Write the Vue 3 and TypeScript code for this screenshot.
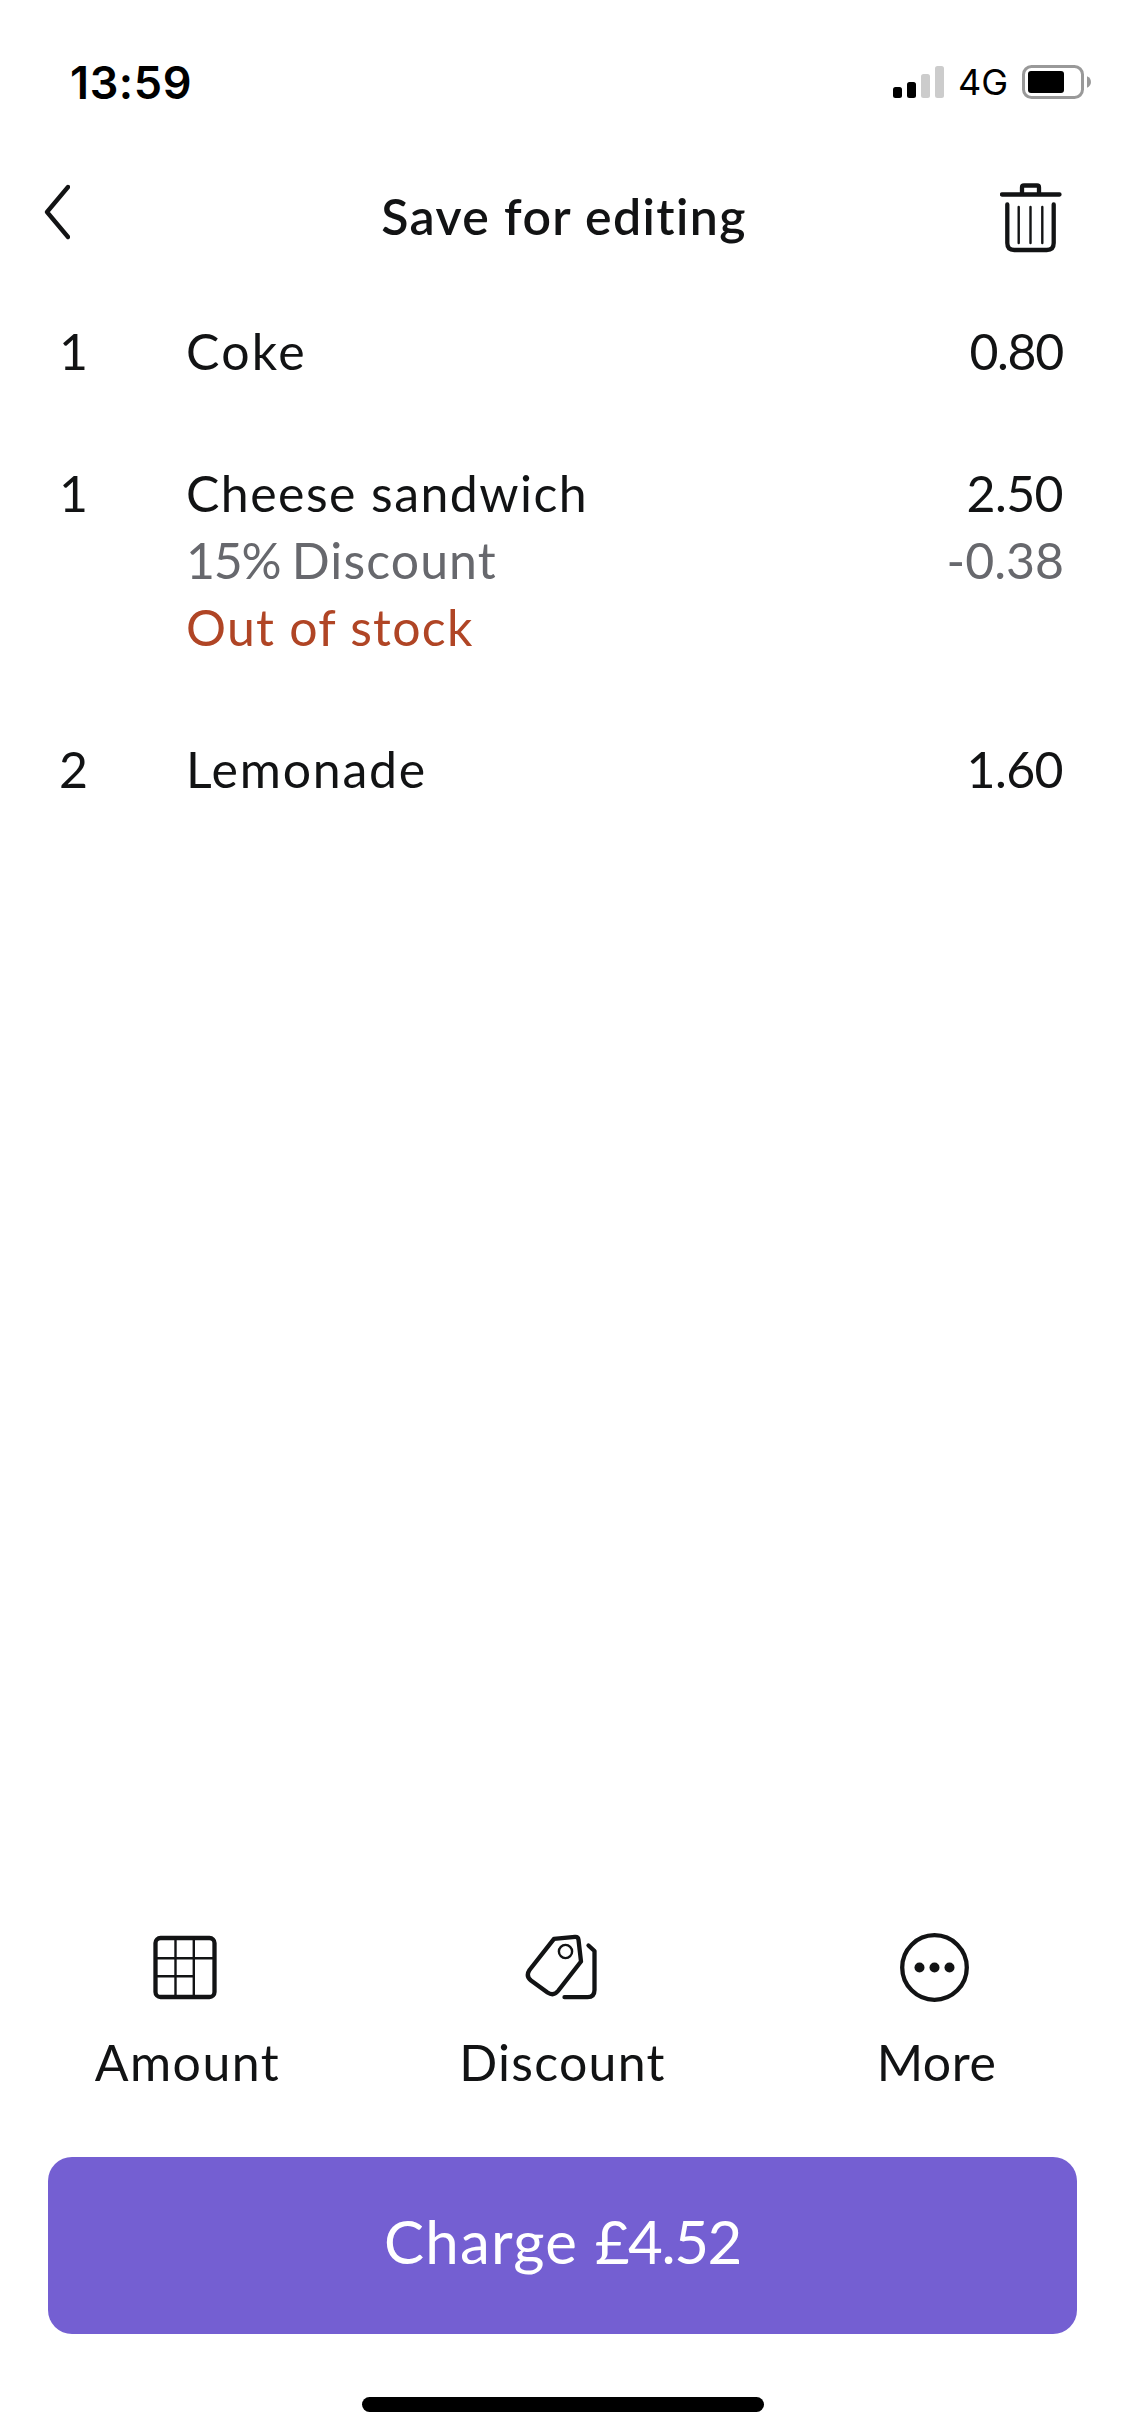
<script setup lang="ts">
interface Line {
  key: string
  text: string
  lead?: string
  amount?: string
  tone: 'default' | 'muted' | 'alert'
}
interface CartItem {
  qty: number
  lines: Line[]
}

const items: CartItem[] = [
  { qty: 1, lines: [{ key: 'coke', text: 'Coke', amount: '0.80', tone: 'default' }] },
  {
    qty: 1,
    lines: [
      { key: 'sandwich', text: 'Cheese sandwich', amount: '2.50', tone: 'default' },
      { key: 'reduction', lead: '15% ', text: 'Discount', amount: '-0.38', tone: 'muted' },
      { key: 'stock', text: 'Out of stock', tone: 'alert' },
    ],
  },
  { qty: 2, lines: [{ key: 'lemonade', text: 'Lemonade', amount: '1.60', tone: 'default' }] },
]
</script>

<template>
  <div class="screen">
    <header class="status">
      <span class="clock">13:59</span>
      <div class="indicators">
        <svg class="signal" width="51" height="32" viewBox="0 0 51 32">
          <rect x="0" y="21" width="9" height="11" rx="2.5" />
          <rect x="14" y="16" width="9" height="16" rx="2.5" />
          <rect x="28" y="8" width="9" height="24" rx="2.5" fill="#ccc" />
          <rect x="42" y="0" width="9" height="32" rx="2.5" fill="#ccc" />
        </svg>
        <span class="network">4G</span>
        <svg class="battery" width="70" height="34" viewBox="0 0 70 34">
          <rect x="1.5" y="1.5" width="59" height="31" rx="8" fill="none" stroke="#999" stroke-width="3" />
          <rect x="6" y="6" width="36" height="22" rx="3" />
          <path d="M65 11.3c5.300 2 5.300 9.400 0 11.400z" fill="#999" />
        </svg>
      </div>
    </header>

    <nav class="bar">
      <svg class="back" width="28" height="58" viewBox="0 0 28 58">
        <path d="M26 4 5 29 26 54" />
      </svg>
      <h1 class="title">Save for editing</h1>
      <svg class="trash" width="62" height="70" viewBox="0 0 62 70">
        <path d="M2 11.500h57.500M22 10V4.500q0-2 2-2h13q2 0 2 2V10M7.300 21.500V60q0 7 7 7h32.400q7 0 7-7V21.500" />
        <path class="thin" d="M18.700 24v36M30.500 24v36M42.300 24v36" />
      </svg>
    </nav>

    <main class="cart">
      <section v-for="(item, i) in items" :key="i" class="item">
        <span class="qty">{{ item.qty }}</span>
        <div class="lines">
          <div v-for="line in item.lines" :key="line.key" class="line" :class="[line.tone, line.key]">
            <span class="text"><span v-if="line.lead" class="lead">{{ line.lead }}</span>{{ line.text }}</span>
            <span v-if="line.amount" class="amount">{{ line.amount }}</span>
          </div>
        </div>
      </section>
    </main>

    <footer class="footer">
      <div class="actions">
        <button class="action keypad">
          <svg width="72" height="72" viewBox="0 0 72 72">
            <rect x="6.500" y="6" width="59" height="59" rx="5" />
            <path class="thin" d="M26.500 7v58M44.800 7v58M7 26.200h58M7 44.200h37.800" />
          </svg>
          <span class="label">Amount</span>
        </button>
        <button class="action tags">
          <svg width="74" height="72" viewBox="-1 0 74 72">
            <path d="M28 6.800 49 4.800q3.200-.2 3.500 3L55 29.500 32 59q-4.500 5.500-10.500 1.500L5 48.500q-5.500-4.500-1.500-10.500z" />
            <path d="M62.500 13.500 68.500 19V58q0 7.200-7 7.200H38.500" />
            <circle class="thin" cx="39.500" cy="19.500" r="6.600" />
          </svg>
          <span class="label">Discount</span>
        </button>
        <button class="action more">
          <svg width="72" height="72" viewBox="0 0 72 72">
            <circle cx="35.500" cy="35.500" r="32.300" />
            <g class="dots">
              <circle cx="20.500" cy="35.500" r="5" />
              <circle cx="35.500" cy="35.500" r="5" />
              <circle cx="50.500" cy="35.500" r="5" />
            </g>
          </svg>
          <span class="label">More</span>
        </button>
      </div>
      <button class="charge">Charge <span class="total">£4.52</span></button>
      <div class="home"></div>
    </footer>
  </div>
</template>

<style>
body {
  margin: 0;
  background: #fff;
}
</style>

<style scoped>
.screen {
  box-sizing: border-box;
  width: 1125px;
  height: 2436px;
  display: flex;
  flex-direction: column;
  background: #fff;
  color: #121314;
  font-family: Lato, 'Open Sans', sans-serif;
  font-size: 50px;
  line-height: 67px;
  white-space: nowrap;
  overflow: hidden;
}
svg {
  display: block;
  flex: none;
}
button {
  border: 0;
  padding: 0;
  background: none;
  color: inherit;
  font: inherit;
}
.status {
  height: 164px;
  padding: 0 33px 0 70px;
  display: flex;
  align-items: center;
  justify-content: space-between;
  box-sizing: border-box;
  color: #000;
  font-family: Inter, sans-serif;
}
.clock {
  font-size: 45px;
  font-weight: 600;
  letter-spacing: 0.6px;
}
.indicators {
  display: flex;
  align-items: center;
}
.network {
  margin-left: 14px;
  width: 64px;
  font-size: 36px;
  line-height: 40px;
}
.bar {
  height: 96px;
  padding: 0 63px 0 42px;
  display: flex;
  align-items: center;
  justify-content: space-between;
}
.back,
.trash,
.action svg {
  fill: none;
  stroke: #121314;
  stroke-width: 4.3;
  stroke-linecap: round;
  stroke-linejoin: round;
}
.trash {
  margin-top: 11px;
}
.trash .thin,
.action .thin {
  stroke-width: 2.4;
}
.action .dots {
  fill: #121314;
  stroke: none;
}
.title {
  margin: 8px 0 0 58px;
  font-size: 50px;
  font-weight: 600;
  letter-spacing: 1.4px;
}
.cart {
  flex: 1;
  display: flex;
  flex-direction: column;
  gap: 75px;
  padding: 58px 62px 0 59px;
}
.item {
  display: flex;
}
.qty {
  width: 127px;
}
.lines {
  flex: 1;
}
.line {
  display: flex;
  justify-content: space-between;
}
.coke .text {
  letter-spacing: 2.3px;
}
.coke .amount {
  letter-spacing: -1.3px;
}
.sandwich .text {
  letter-spacing: 1.45px;
}
.sandwich .amount,
.lemonade .amount {
  letter-spacing: -0.6px;
}
.reduction .text {
  letter-spacing: 1.1px;
}
.reduction .lead {
  letter-spacing: -1.3px;
}
.reduction .amount {
  margin-right: -1px;
}
.stock .text {
  letter-spacing: 1.25px;
}
.lemonade .text {
  letter-spacing: 1.75px;
}
.muted {
  color: #67686d;
}
.alert {
  color: #b04525;
}
.actions {
  display: flex;
}
.action {
  flex: 1;
  display: flex;
  flex-direction: column;
  align-items: center;
  gap: 25px;
}
.keypad svg,
.more svg {
  margin-right: 6px;
}
.tags svg {
  margin-right: 1px;
}
.keypad .label {
  letter-spacing: 1.5px;
}
.tags .label {
  letter-spacing: 1.3px;
}
.more .label {
  letter-spacing: 0.5px;
  margin-right: 2px;
}
.footer {
  display: flex;
  flex-direction: column;
}
.charge {
  box-sizing: border-box;
  height: 177px;
  margin: 61px 48px 63px;
  padding-bottom: 9px;
  border-radius: 24px;
  background: #745fd2;
  color: #fff;
  font-size: 60px;
  letter-spacing: 1.2px;
}
.total {
  letter-spacing: -1.4px;
}
.home {
  width: 402px;
  height: 15px;
  margin: 0 auto 24px;
  border-radius: 8px;
  background: #000;
}
</style>
